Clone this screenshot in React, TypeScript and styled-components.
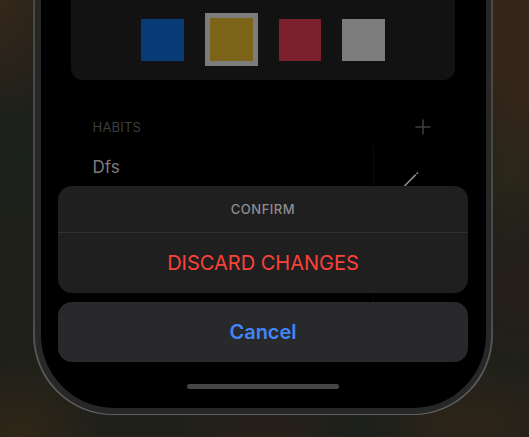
import React from "react";
import styled, { createGlobalStyle } from "styled-components";

const GlobalStyle = createGlobalStyle`
  * { box-sizing: border-box; }
  body { margin: 0; background: #20201a; }
`;

const Backdrop = styled.main`
  width: 529px;
  height: 437px;
  overflow: hidden;
  padding: 0 36px 0 33px;
  font-family: Inter, "Liberation Sans", sans-serif;
  background:
    radial-gradient(ellipse 80px 120px at 0 0, #35271a, transparent),
    radial-gradient(ellipse 75px 90px at 25px 155px, #1a201a, transparent),
    radial-gradient(ellipse 80px 75px at 20px 437px, #302717, transparent),
    radial-gradient(ellipse 90px 170px at 529px 30px, #35261a 40%, transparent),
    radial-gradient(ellipse 60px 90px at 510px 170px, #292719, transparent),
    radial-gradient(ellipse 50px 70px at 515px 290px, #251e1a, transparent),
    radial-gradient(ellipse 90px 50px at 266px 437px, #271f1a, transparent),
    radial-gradient(ellipse 60px 50px at 360px 437px, #1c201a, transparent),
    radial-gradient(ellipse 110px 60px at 470px 425px, #2e2518, transparent),
    #20201a;
`;

const Rim = styled.div`
  height: 414.5px;
  padding: 0 2px 1px;
  border-radius: 0 0 80px 80px;
  background: linear-gradient(#4b4947 0 75%, #626262 96%);
`;

const Bezel = styled.div`
  height: 100%;
  padding: 0 5.5px 5.2px;
  border-radius: 0 0 78.5px 78.5px;
  background: #272727;
`;

const Screen = styled.div`
  position: relative;
  height: 100%;
  overflow: hidden;
  padding: 0 30.5px;
  border-radius: 0 0 73px 73px;
  background: #000;
`;

const ColorCard = styled.section`
  display: flex;
  align-items: center;
  justify-content: center;
  gap: 21.2px;
  height: 80.4px;
  padding: 0 0 1px;
  border-radius: 0 0 12px 12px;
  background: #121212;
`;

const Swatch = styled.div<{ $color: string; $selected?: boolean }>`
  width: ${(p) => (p.$selected ? 53 : 42.3)}px;
  height: ${(p) => (p.$selected ? 53 : 42)}px;
  border: ${(p) => (p.$selected ? "5px solid #7c7c7c" : "0")};
  background: ${(p) => p.$color};
`;

const SectionHeader = styled.header`
  display: flex;
  align-items: center;
  justify-content: space-between;
  height: 20px;
  margin: 36.2px 24px 0 21.6px;
  color: #3e3e3e;
  font-size: 13px;
  letter-spacing: 0.2px;
`;

const HabitRow = styled.div`
  display: grid;
  grid-template-columns: 281.2px 1fr;
  height: 155px;
  margin: 9px 0 0 21.6px;
`;

const HabitName = styled.div`
  padding-top: 9px;
  border-right: 1px solid #0c0c0c;
  color: #7c7c7c;
  font-size: 17px;
  line-height: 24px;
`;

const HabitAction = styled.div`
  padding: 25px 0 0 30px;
`;

const ActionSheet = styled.div`
  position: absolute;
  left: 17.9px;
  right: 17.9px;
  top: 185.5px;
  display: flex;
  flex-direction: column;
  gap: 8.5px;
`;

const Dialog = styled.div`
  height: 107.5px;
  overflow: hidden;
  border-radius: 14px;
  background: #1f1f1f;
  text-align: center;
`;

const DialogTitle = styled.div`
  height: 47px;
  border-bottom: 1px solid #303030;
  color: #8e8e8e;
  font-size: 13px;
  font-weight: 500;
  letter-spacing: 0.5px;
  line-height: 47px;
`;

const SheetButton = styled.button<{ $primary?: boolean }>`
  width: 100%;
  height: 60.5px;
  padding: 0;
  border: 0;
  border-radius: ${(p) => (p.$primary ? "14px" : "0")};
  background: ${(p) => (p.$primary ? "#29292b" : "transparent")};
  color: ${(p) => (p.$primary ? "#4086f6" : "#fb4139")};
  font: ${(p) => (p.$primary ? 600 : 400)} 20px/60px Inter, "Liberation Sans", sans-serif;
`;

const HomeIndicator = styled.div`
  position: absolute;
  left: 146.5px;
  bottom: 19px;
  width: 152px;
  height: 5.5px;
  border-radius: 3px;
  background: #464646;
`;

const PlusIcon = () => (
  <svg width="16" height="16" viewBox="0 0 16 16" fill="none" stroke="#3e3e3e" strokeWidth="1.5" strokeLinecap="round">
    <path d="M8 1v14M1 8h14" />
  </svg>
);

const PencilIcon = () => (
  <svg width="18" height="18" viewBox="0 0 18 18" fill="none" stroke="#8b8b8b" strokeWidth="1.7" strokeLinecap="round">
    <path d="M1 14.5 11.3 4.2M13.1 2.5l.3-.3" />
  </svg>
);

export default function App() {
  return (
    <>
      <GlobalStyle />
      <Backdrop>
        <Rim>
          <Bezel>
            <Screen>
              <ColorCard>
                <Swatch $color="#083b75" />
                <Swatch $color="#7b6417" $selected />
                <Swatch $color="#7b202d" />
                <Swatch $color="#7c7c7c" />
              </ColorCard>
              <SectionHeader>
                <span>HABITS</span>
                <PlusIcon />
              </SectionHeader>
              <HabitRow>
                <HabitName>Dfs</HabitName>
                <HabitAction>
                  <PencilIcon />
                </HabitAction>
              </HabitRow>
              <ActionSheet>
                <Dialog>
                  <DialogTitle>CONFIRM</DialogTitle>
                  <SheetButton>DISCARD CHANGES</SheetButton>
                </Dialog>
                <SheetButton $primary>Cancel</SheetButton>
              </ActionSheet>
              <HomeIndicator />
            </Screen>
          </Bezel>
        </Rim>
      </Backdrop>
    </>
  );
}
